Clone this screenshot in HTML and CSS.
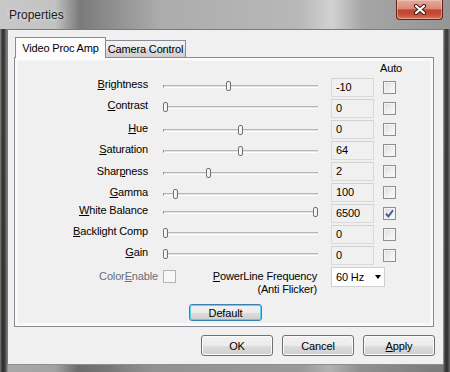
FILE: index.html
```html
<!DOCTYPE html>
<html>
<head>
<meta charset="utf-8">
<link rel="stylesheet" href="styles.css">
</head>
<body>
<div class="window">
  <div class="titlebar">
    <span class="title">Properties</span>
    <div class="close">
      <svg width="14" height="11" viewBox="0 0 14 11">
        <path d="M3 2 L11 9 M11 2 L3 9" stroke="#3f1a14" stroke-width="4.2" stroke-linecap="round" fill="none"/>
        <path d="M3 2 L11 9 M11 2 L3 9" stroke="#ffffff" stroke-width="2.2" stroke-linecap="round" fill="none"/>
      </svg>
    </div>
  </div>
  <div class="client">
    <div class="tabs">
      <div class="tab tab-active">Video Proc Amp</div>
      <div class="tab tab-inactive">Camera Control</div>
    </div>
    <div class="page">
      <div class="auto-head">Auto</div>
      <div class="rows">
        <div class="row dy0">
          <span class="label"><u>B</u>rightness</span>
          <div class="slider"><div class="track"></div><div class="thumb" style="left:63px"></div></div>
          <div class="edit">-10</div>
          <div class="check"></div>
        </div>
        <div class="row dy0">
          <span class="label"><u>C</u>ontrast</span>
          <div class="slider"><div class="track"></div><div class="thumb" style="left:0px"></div></div>
          <div class="edit">0</div>
          <div class="check"></div>
        </div>
        <div class="row dy2">
          <span class="label"><u>H</u>ue</span>
          <div class="slider"><div class="track"></div><div class="thumb" style="left:75px"></div></div>
          <div class="edit">0</div>
          <div class="check"></div>
        </div>
        <div class="row dy2">
          <span class="label"><u>S</u>aturation</span>
          <div class="slider"><div class="track"></div><div class="thumb" style="left:75px"></div></div>
          <div class="edit">64</div>
          <div class="check"></div>
        </div>
        <div class="row dy3">
          <span class="label">Shar<u>p</u>ness</span>
          <div class="slider"><div class="track"></div><div class="thumb" style="left:43px"></div></div>
          <div class="edit">2</div>
          <div class="check"></div>
        </div>
        <div class="row dy3">
          <span class="label"><u>G</u>amma</span>
          <div class="slider"><div class="track"></div><div class="thumb" style="left:10px"></div></div>
          <div class="edit">100</div>
          <div class="check"></div>
        </div>
        <div class="row dy0">
          <span class="label"><u>W</u>hite Balance</span>
          <div class="slider"><div class="track"></div><div class="thumb" style="left:150px"></div></div>
          <div class="edit">6500</div>
          <div class="check checked">
            <svg width="11" height="11" viewBox="0 0 11 11"><path d="M2 5.6 L4.4 8.4 L9 2.2" stroke="#3d5c9c" stroke-width="1.9" fill="none"/></svg>
          </div>
        </div>
        <div class="row dy0">
          <span class="label"><u>B</u>acklight Comp</span>
          <div class="slider"><div class="track"></div><div class="thumb" style="left:0px"></div></div>
          <div class="edit">0</div>
          <div class="check"></div>
        </div>
        <div class="row dy0">
          <span class="label"><u>G</u>ain</span>
          <div class="slider"><div class="track"></div><div class="thumb" style="left:0px"></div></div>
          <div class="edit">0</div>
          <div class="check"></div>
        </div>
      </div>
      <div class="extra">
        <div class="color-group">
          <span class="disabled-label">Color<u>E</u>nable</span>
          <div class="check disabled"></div>
        </div>
        <div class="power"><u>P</u>owerLine Frequency<br>(Anti Flicker)</div>
        <div class="combo"><span>60 Hz</span><span class="arrow"></span></div>
      </div>
      <div class="default-row">
        <div class="btn btn-default">Default</div>
      </div>
    </div>
    <div class="buttons">
      <div class="btn btn-main">OK</div>
      <div class="btn btn-main">Cancel</div>
      <div class="btn btn-main"><u>A</u>pply</div>
    </div>
  </div>
</div>
</body>
</html>
```

FILE: styles.css
```css
html, body {
  margin: 0;
  padding: 0;
}

body {
  width: 450px;
  height: 372px;
  overflow: hidden;
  font-family: "Liberation Sans", Arial, sans-serif;
  font-size: 11px;
  letter-spacing: -0.15px;
  color: #000;
}

.window {
  width: 450px;
  height: 372px;
  display: flex;
  flex-direction: column;
  background:
    linear-gradient(to bottom, rgba(0,0,0,0) 0, rgba(0,0,0,0) 30px, rgba(0,0,0,0.15) 372px),
    linear-gradient(to right, #9c9c9c 0, #5a5a5a 1px, #2f2f2f 3px, #4c4c4c 5px, #8a8a8a 7px, rgba(0,0,0,0) 8px, rgba(0,0,0,0) 442px, #8a8a8a 443px, #4a4a4a 445px, #333 447px, #7a7a7a 450px),
    linear-gradient(to right, #c6c6c6 0, #bebebe 55px, #7e7e7e 78px, #8a8a8a 105px, #aaaaaa 150px, #b4b4b4 300px, #d0d0d0 330px, #a8a8a8 360px, #909090 440px);
}

.titlebar {
  height: 29px;
  flex: none;
  display: flex;
  align-items: flex-start;
  justify-content: space-between;
  padding: 0 7px 0 9px;
  background: linear-gradient(to right, #c8c8c8 0, #c2c2c2 55px, #7a7a7a 80px, #8c8c8c 108px, #acacac 160px, #b8b8b8 300px, #d2d2d2 332px, #a6a6a6 362px, #959595 450px);
}

.title {
  font-size: 12px;
  letter-spacing: 0;
  line-height: 14px;
  margin-top: 8px;
  color: #1b1b1b;
  text-shadow: 0 0 5px rgba(255, 255, 255, 0.7);
}

.close {
  width: 47px;
  height: 20px;
  box-sizing: border-box;
  border: 1px solid #5e251c;
  border-top: none;
  border-radius: 0 0 4px 4px;
  background: linear-gradient(#e7aa9b 0, #d98a79 45%, #c24632 52%, #c44b36 75%, #dc7658 100%);
  box-shadow: inset 0 0 0 1px rgba(255, 220, 210, 0.45);
  display: flex;
  align-items: center;
  justify-content: center;
}

.close svg {
  display: block;
}

.client {
  flex: none;
  height: 336px;
  margin: 0 6px 0 7px;
  box-sizing: border-box;
  border: 1px solid #7a7a7a;
  border-right-color: #8e8e8e;
  border-bottom-color: #8e8e8e;
  background: #f0f0f0;
  padding: 7px 8px 0 6px;
}

.tabs {
  height: 21px;
  display: flex;
  align-items: flex-end;
  padding-left: 1px;
  margin-bottom: -1px;
  position: relative;
  z-index: 1;
}

.tab {
  box-sizing: border-box;
  border: 1px solid #898c95;
  border-bottom: none;
  text-align: center;
  line-height: 13px;
  white-space: nowrap;
}

.tab-active {
  width: 91px;
  height: 21px;
  padding-top: 4px;
  background: #fcfcfc;
  position: relative;
  z-index: 2;
}

.tab-inactive {
  width: 81px;
  height: 17px;
  margin-left: -1px;
  margin-bottom: 1px;
  padding-top: 2px;
  background: linear-gradient(#f2f2f2 0, #ebebeb 50%, #dddddd 51%, #cfcfcf 100%);
}

.page {
  width: 420px;
  height: 270px;
  box-sizing: border-box;
  border: 1px solid #898c95;
  background: #f0f0f0;
  box-shadow: inset 0 0 0 2px #fcfcfc, inset 0 0 0 3px #f6f6f6;
  padding-top: 3px;
}

.auto-head {
  height: 15px;
  line-height: 14px;
  padding-left: 365px;
  margin-bottom: 2px;
}

.rows {
  display: flex;
  flex-direction: column;
  gap: 2px;
}

.row {
  height: 19px;
  display: flex;
  align-items: flex-start;
}

.label {
  width: 133px;
  padding-right: 15px;
  text-align: right;
  line-height: 13px;
  white-space: nowrap;
}

.slider {
  position: relative;
  width: 155px;
  height: 10px;
  margin-right: 13px;
}

.dy0 .label { margin-top: 0; }
.dy0 .slider { margin-top: 3px; }
.dy2 .label { margin-top: 2px; }
.dy2 .slider { margin-top: 5px; }
.dy3 .label { margin-top: 3px; }
.dy3 .slider { margin-top: 6px; }

.track {
  margin-top: 4px;
  height: 1px;
  border-top: 1px solid #b5b5b5;
  border-bottom: 1px solid #ffffff;
  border-left: 1px solid #8a8a8a;
  background: #e3e3e3;
  width: 154px;
}

.thumb {
  position: absolute;
  top: 0;
  width: 5px;
  height: 10px;
  box-sizing: border-box;
  border: 1px solid #707070;
  border-radius: 2px;
  background: linear-gradient(to right, #ffffff 0, #ececec 100%);
}

.edit {
  width: 43px;
  height: 19px;
  box-sizing: border-box;
  border: 1px solid #dadada;
  border-top-color: #d2d2d2;
  background: #f0f0f0;
  padding-left: 4px;
  line-height: 17px;
  margin-right: 9px;
}

.check {
  width: 13px;
  height: 13px;
  box-sizing: border-box;
  border: 1px solid #8f8f8f;
  background: linear-gradient(135deg, #dcdcdc 0, #f0f0f0 55%, #fbfbfb 100%);
  box-shadow: inset 0 0 0 1px #f4f4f4;
  align-self: center;
  display: flex;
  align-items: center;
  justify-content: center;
}

.check svg {
  display: block;
}

.check.disabled {
  border-color: #b4b4b4;
  background: #f7f7f7;
  box-shadow: none;
}

.extra {
  margin-top: 2px;
  display: flex;
  align-items: flex-start;
}

.color-group {
  width: 161px;
  height: 13px;
  margin-top: 3px;
  display: flex;
  justify-content: flex-end;
  align-items: center;
  gap: 5px;
}

.disabled-label {
  color: #6d6d78;
  line-height: 13px;
  white-space: nowrap;
}

.power {
  margin-left: 35px;
  margin-top: 3px;
  width: 106px;
  text-align: right;
  line-height: 13px;
  white-space: nowrap;
}

.combo {
  margin-left: 14px;
  width: 54px;
  height: 20px;
  box-sizing: border-box;
  border: 1px solid #d0d0d0;
  background: #ffffff;
  display: flex;
  align-items: center;
  padding: 0 3px 0 4px;
}

.arrow {
  margin-left: auto;
  width: 0;
  height: 0;
  border-left: 3.5px solid transparent;
  border-right: 3.5px solid transparent;
  border-top: 4px solid #000;
}

.default-row {
  margin-top: 8px;
  padding-left: 174px;
}

.btn {
  box-sizing: border-box;
  border-radius: 3px;
  text-align: center;
  display: flex;
  align-items: center;
  justify-content: center;
}

.btn-default {
  width: 73px;
  height: 17px;
  border: 1px solid #3c7fb1;
  background: linear-gradient(#f2f2f2 0, #ebebeb 50%, #dddddd 51%, #cfcfcf 100%);
  box-shadow: inset 0 0 0 1px #5fd0f5;
}

.buttons {
  margin-top: 8px;
  display: flex;
  justify-content: flex-end;
  gap: 9px;
}

.btn-main {
  width: 72px;
  height: 21px;
  border: 1px solid #707070;
  background: linear-gradient(#f2f2f2 0, #ebebeb 50%, #dddddd 51%, #cfcfcf 100%);
  box-shadow: inset 0 0 0 1px #fbfbfb;
}
```
